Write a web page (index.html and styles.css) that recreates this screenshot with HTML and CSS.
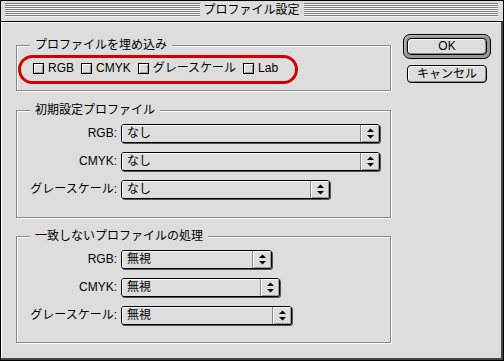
FILE: index.html
```html
<!DOCTYPE html>
<html lang="ja">
<head>
    <meta charset="UTF-8">
    <title>プロファイル設定</title>
    <link rel="stylesheet" href="styles.css">
</head>
<body>

    <div class="window">
        <div class="titlebar">
            <span class="stripes"></span>
            <span class="title">プロファイル設定</span>
            <span class="stripes"></span>
        </div>

        <div class="dialog">
            <div class="main">

                <div class="group group-embed">
                    <span class="group-title">プロファイルを埋め込み</span>
                    <div class="checks">
                        <label class="check"><input type="checkbox">RGB</label>
                        <label class="check"><input type="checkbox">CMYK</label>
                        <label class="check"><input type="checkbox">グレースケール</label>
                        <label class="check"><input type="checkbox">Lab</label>
                    </div>
                    <span class="highlight"></span>
                </div>

                <div class="group group-default">
                    <span class="group-title">初期設定プロファイル</span>
                    <div class="rows">
                        <span class="row-label">RGB:</span>
                        <div class="popup popup-259">
                            <span class="popup-value">なし</span>
                            <span class="popup-arrow"><svg width="7" height="11" viewBox="0 0 7 11"><polygon points="0,4 3.5,0.5 7,4"/><polygon points="0,7 7,7 3.5,10.5"/></svg></span>
                        </div>
                        <span class="row-label">CMYK:</span>
                        <div class="popup popup-259">
                            <span class="popup-value">なし</span>
                            <span class="popup-arrow"><svg width="7" height="11" viewBox="0 0 7 11"><polygon points="0,4 3.5,0.5 7,4"/><polygon points="0,7 7,7 3.5,10.5"/></svg></span>
                        </div>
                        <span class="row-label">グレースケール:</span>
                        <div class="popup popup-209">
                            <span class="popup-value">なし</span>
                            <span class="popup-arrow"><svg width="7" height="11" viewBox="0 0 7 11"><polygon points="0,4 3.5,0.5 7,4"/><polygon points="0,7 7,7 3.5,10.5"/></svg></span>
                        </div>
                    </div>
                </div>

                <div class="group group-mismatch">
                    <span class="group-title">一致しないプロファイルの処理</span>
                    <div class="rows">
                        <span class="row-label">RGB:</span>
                        <div class="popup popup-151">
                            <span class="popup-value">無視</span>
                            <span class="popup-arrow"><svg width="7" height="11" viewBox="0 0 7 11"><polygon points="0,4 3.5,0.5 7,4"/><polygon points="0,7 7,7 3.5,10.5"/></svg></span>
                        </div>
                        <span class="row-label">CMYK:</span>
                        <div class="popup popup-159">
                            <span class="popup-value">無視</span>
                            <span class="popup-arrow"><svg width="7" height="11" viewBox="0 0 7 11"><polygon points="0,4 3.5,0.5 7,4"/><polygon points="0,7 7,7 3.5,10.5"/></svg></span>
                        </div>
                        <span class="row-label">グレースケール:</span>
                        <div class="popup popup-171">
                            <span class="popup-value">無視</span>
                            <span class="popup-arrow"><svg width="7" height="11" viewBox="0 0 7 11"><polygon points="0,4 3.5,0.5 7,4"/><polygon points="0,7 7,7 3.5,10.5"/></svg></span>
                        </div>
                    </div>
                </div>

            </div>

            <div class="buttons">
                <div class="default-ring">
                    <button type="button" class="btn">OK</button>
                </div>
                <button type="button" class="btn btn-cancel">キャンセル</button>
            </div>
        </div>
    </div>

</body>
</html>
```

FILE: styles.css
```css
body {
    margin: 0;
    font-family: "Liberation Sans", "Noto Sans CJK JP", sans-serif;
    font-size: 12px;
    color: #000;
    background-color: #dddddd;
}

.window {
    width: 504px;
    height: 361px;
    box-sizing: border-box;
    border: 1px solid #000;
    background-color: #dddddd;
    display: flex;
    flex-direction: column;
}

/* title bar */
.titlebar {
    height: 21px;
    box-sizing: border-box;
    border-bottom: 1px solid #000;
    display: flex;
    align-items: flex-start;
    padding: 2px 5px 0 4px;
}

.stripes {
    flex: 1;
    height: 14px;
    background: repeating-linear-gradient(to bottom, #7b7b7b 0 1px, #f4f4f4 1px 2px);
}

.title {
    padding: 0 4px;
    line-height: 15px;
}

/* dialog body */
.dialog {
    flex: 1;
    display: flex;
    align-items: flex-start;
    padding: 12px 0 0 15px;
    box-shadow: inset 1px 1px 0 #fff;
    border-right: 2px solid #444;
    border-bottom: 2px solid #444;
}

.main {
    width: 375px;
}

.group {
    position: relative;
    border: 1px solid #888;
    box-shadow: inset 1px 1px 0 #fff, 1px 1px 0 #fff;
}

.group-title {
    display: block;
    width: fit-content;
    margin: -9px 0 0 13px;
    padding: 0 5px;
    line-height: 16px;
    background-color: #dddddd;
}

.group-embed {
    margin-top: 11px;
    height: 46px;
    box-sizing: border-box;
}

.group-default {
    margin-top: 19px;
    padding-bottom: 18px;
}

.group-mismatch {
    margin-top: 18px;
    padding-bottom: 17px;
}

/* checkboxes */
.checks {
    display: flex;
    gap: 7px;
    margin-top: 7px;
    padding-left: 16px;
    line-height: 16px;
}

.check {
    display: flex;
    align-items: center;
    gap: 4px;
}

.check input {
    appearance: none;
    margin: 0;
    width: 11px;
    height: 11px;
    border: 1px solid #000;
    background-color: #dddddd;
    box-shadow: inset 1px 1px 0 #fff, inset -1px -1px 0 #999;
    box-sizing: border-box;
}

.highlight {
    position: absolute;
    left: 1px;
    top: 9px;
    width: 280px;
    height: 29px;
    box-sizing: border-box;
    border: 3px solid #d40000;
    border-radius: 15px;
}

/* popup rows */
.rows {
    display: grid;
    grid-template-columns: 100px auto;
    column-gap: 4px;
    row-gap: 9px;
    align-items: center;
    justify-items: start;
    margin-top: 6px;
}

.row-label {
    justify-self: end;
    line-height: 19px;
}

.popup {
    display: flex;
    height: 19px;
    box-sizing: border-box;
    border: 1px solid #000;
    border-radius: 3px;
    box-shadow: 1px 1px 0 #555;
    background-color: #dddddd;
    overflow: hidden;
}

.popup-259 { width: 259px; }
.popup-209 { width: 209px; }
.popup-151 { width: 151px; }
.popup-159 { width: 159px; }
.popup-171 { width: 171px; }

.popup-value {
    flex: 1;
    padding-left: 5px;
    line-height: 17px;
    box-shadow: inset 1px 1px 0 #fff;
}

.popup-arrow {
    width: 18px;
    border-left: 1px solid #888;
    box-shadow: inset 1px 1px 0 #fff, inset -1px -1px 0 #999;
    display: flex;
    align-items: center;
    justify-content: center;
}

/* buttons */
.buttons {
    margin-left: 12px;
    display: flex;
    flex-direction: column;
    align-items: center;
    gap: 6px;
}

.default-ring {
    padding: 3px;
    border: 1px solid #000;
    border-radius: 7px;
    background-color: #999;
    box-shadow: inset 1px 1px 0 #bbb;
}

.btn {
    display: block;
    width: 80px;
    height: 17px;
    padding: 0;
    font-family: inherit;
    font-size: 12px;
    line-height: 15px;
    color: #000;
    background-color: #dddddd;
    border: 1px solid #000;
    border-radius: 4px;
    box-shadow: inset 1px 1px 0 #fff, inset -1px -1px 0 #888;
}

.btn-cancel {
    height: 18px;
}
```
